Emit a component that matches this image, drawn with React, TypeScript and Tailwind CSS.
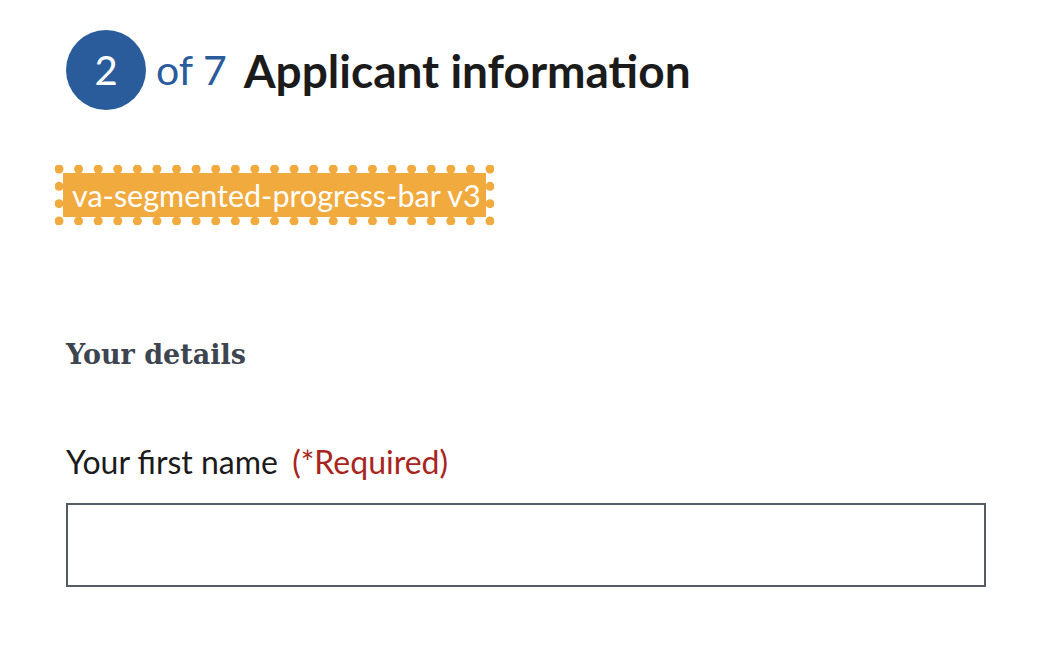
// dotted frame: 23 dots across, 4 down, dots centred 4px in from the edge
const W = 439
const H = 60
const dots: [number, number][] = []
for (let i = 0; i <= 22; i++) {
  const x = 4 + (i * (W - 8)) / 22
  dots.push([x, 4], [x, H - 4])
}
for (let j = 1; j < 3; j++) {
  const y = 4 + (j * (H - 8)) / 3
  dots.push([4, y], [W - 4, y])
}

function Badge({ children }: { children: React.ReactNode }) {
  return (
    <div className="relative -ml-[11px] mt-[55px] h-[60px] w-[439px] p-[8px]">
      <svg className="absolute inset-0" width={W} height={H} viewBox={`0 0 ${W} ${H}`}>
        {dots.map(([cx, cy], i) => (
          <circle key={i} cx={cx} cy={cy} r="4.5" fill="#f1aa3e" />
        ))}
      </svg>
      <div className="relative flex h-full items-center bg-[#f1aa3e] pl-[9px] text-[30.5px] leading-none text-white">
        {children}
      </div>
    </div>
  )
}

export default function App() {
  return (
    <div className="min-h-[646px] w-[1052px] bg-white pl-[66px] pt-[30px] font-['Lato',sans-serif] text-[#1b1b1b]">
      {/* Step header */}
      <div className="flex items-center">
        <div className="flex h-[80px] w-[80px] items-center justify-center rounded-full bg-[#2a5c9c] text-[40px] text-white">
          2
        </div>
        <span className="ml-[10px] text-[41px] text-[#2a5c9c]">of 7</span>
        <h1 className="ml-[17px] text-[46px] font-bold">Applicant information</h1>
      </div>

      <Badge>va-segmented-progress-bar v3</Badge>

      <h2 className="mt-[110px] font-['DejaVu_Serif',serif] text-[27px] font-bold text-[#3d4551]">Your details</h2>

      <label className="mt-[66px] block text-[32px] leading-[40px]">
        Your first name <span className="ml-[6px] text-[#a8251d]">(*Required)</span>
      </label>
      <input type="text" className="mt-[21px] h-[84px] w-[920px] border-2 border-[#565c65]" />
    </div>
  )
}
